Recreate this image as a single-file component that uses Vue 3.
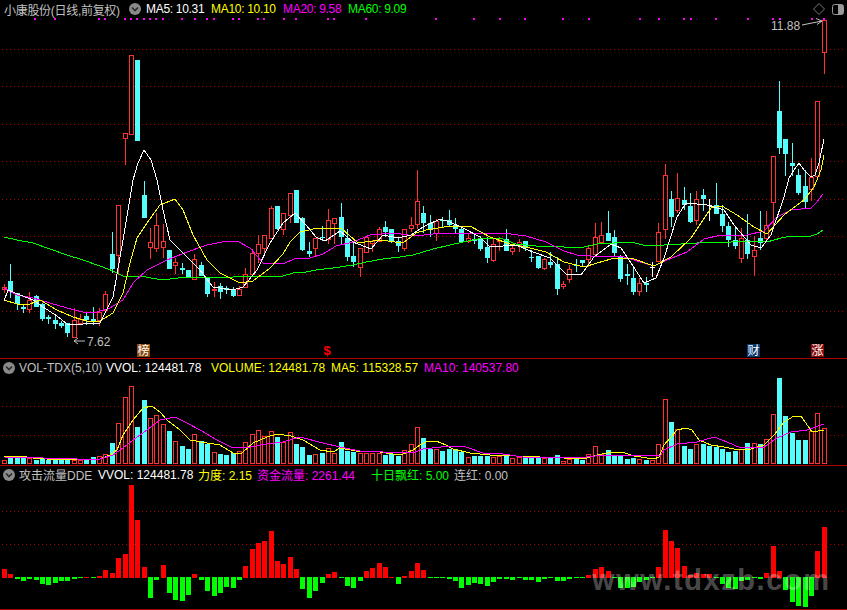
<template>
  <div class="screen">
    <!-- K line pane -->
    <div class="pane pane-main">
      <div class="head main-head">
        <span class="title grey">小康股份(日线,前复权)</span>
        <svg class="chev" viewBox="0 0 12 12"><circle cx="6" cy="6" r="6" fill="#8a8a8a" /><path d="M3 4.5 6 7.5 9 4.5" fill="none" stroke="#2a2a2a" stroke-width="1.6" /></svg>
        <span class="ma5 white">MA5: 10.31</span>
        <span class="ma10 yellow">MA10: 10.10</span>
        <span class="ma20 magenta">MA20: 9.58</span>
        <span class="green">MA60: 9.09</span>
        <svg class="tool diamond" viewBox="0 0 12 12"><path d="M6 .5 11.5 6 6 11.5 .5 6Z" fill="none" stroke="#777" /></svg>
        <svg class="tool panel" viewBox="0 0 12 11"><rect x=".5" y=".5" width="11" height="10" rx="2" fill="#000" stroke="#999" /><rect x="6" y="1" width="5" height="9" fill="#999" /></svg>
      </div>
      <svg class="chart" width="847" height="340" viewBox="0 18 847 340">
        <line v-for="y in mainGrid" :key="y" class="grid" x1="2" x2="845" :y1="y + 0.5" :y2="y + 0.5" />
        <rect v-for="x in dots" :key="x" :x="x - 1" y="18" width="2" height="2" fill="#ff00ff" />
        <g v-for="c in candles" :key="c.i">
          <line :class="'wick ' + c.kind" :x1="c.x + 2.5" :x2="c.x + 2.5" :y1="c.high" :y2="c.low" />
          <rect v-if="c.kind === 'r'" class="hollow" :x="c.x + 0.5" :y="c.top + 0.5" width="4" :height="c.h" />
          <rect v-else :class="'solid ' + c.kind" :x="c.x" :y="c.top" width="5" :height="c.kind === 'c' ? c.h : 1" />
        </g>
        <polyline class="line" stroke="#00ff00" :points="ma60" />
        <polyline class="line" stroke="#ff00ff" :points="ma20" />
        <polyline class="line" stroke="#ffff00" :points="ma10" />
        <polyline class="line" stroke="#ffffff" :points="ma5" />

        <text class="price" x="771" y="30">11.88</text>
        <path class="arrow" d="M802 25 822 21M816 18.500 822 21 817 24.500" />
        <text class="price" x="87" y="346">7.62</text>
        <path class="arrow" d="M85 341H74M78 338 74 341 78 344" />

        <rect x="137" y="344" width="13" height="13" fill="#8a4a12" />
        <text class="tag" x="143.500" y="355">榜</text>
        <text class="dollar" x="327" y="355">$</text>
        <rect x="747" y="344" width="13" height="13" fill="#0a3a6e" />
        <text class="tag" x="753.500" y="355">财</text>
        <rect x="811" y="344" width="13" height="13" fill="#8a0a0a" />
        <text class="tag" x="817.500" y="355">涨</text>
      </svg>
    </div>

    <!-- volume pane -->
    <div class="pane pane-vol">
      <div class="head">
        <svg class="chev" viewBox="0 0 12 12"><circle cx="6" cy="6" r="6" fill="#8a8a8a" /><path d="M3 4.5 6 7.500 9 4.500" fill="none" stroke="#2a2a2a" stroke-width="1.6" /></svg>
        <span class="v-title grey">VOL-TDX(5,10)</span>
        <span class="v-wol white">VVOL: 124481.78</span>
        <span class="v-volume yellow">VOLUME: 124481.78</span>
        <span class="v-ma5 yellow">MA5: 115328.57</span>
        <span class="magenta">MA10: 140537.80</span>
      </div>
      <svg class="chart" width="847" height="89" viewBox="0 376 847 89">
        <line v-for="y in [406, 435]" :key="y" class="grid" x1="2" x2="845" :y1="y + 0.5" :y2="y + 0.5" />
        <template v-for="b in volBars" :key="b.i">
          <rect v-if="b.red" class="hollow" :x="b.x + 0.5" :y="b.top + 0.5" width="4" :height="463 - b.top" />
          <rect v-else class="solid c" :x="b.x" :y="b.top" width="5" :height="464 - b.top" />
        </template>
        <polyline class="line" stroke="#ffff00" :points="volMa5" />
        <polyline class="line" stroke="#ff00ff" :points="volMa10" />
      </svg>
    </div>

    <!-- DDE pane -->
    <div class="pane pane-dde">
      <div class="head">
        <svg class="chev" viewBox="0 0 12 12"><circle cx="6" cy="6" r="6" fill="#8a8a8a" /><path d="M3 4.500 6 7.500 9 4.500" fill="none" stroke="#2a2a2a" stroke-width="1.6" /></svg>
        <span class="d-title grey">攻击流量DDE</span>
        <span class="d-wol white">VVOL: 124481.78</span>
        <span class="d-force yellow">力度: 2.15</span>
        <span class="d-money magenta">资金流量: 2261.44</span>
        <span class="d-ten green">十日飘红: 5.00</span>
        <span class="grey">连红: 0.00</span>
      </div>
      <svg class="chart" width="847" height="126" viewBox="0 483 847 126">
        <line v-for="y in [511, 544]" :key="y" class="grid" x1="2" x2="845" :y1="y + 0.5" :y2="y + 0.5" />
        <rect v-for="b in ddeBars" :key="b.i" :x="b.x" :y="b.y" width="5" :height="b.h" :fill="b.fill" />
        <text class="mark" x="592" y="590" textLength="237">www.tdxzb.com</text>
      </svg>
    </div>
  </div>
</template>

<script setup>
const barX = (i) => Math.round(4.3 + i * 6.355 - 2.5)

const mainGrid = [49, 86, 124, 161, 199, 236, 274, 311]

const dots = [35, 55, 99, 105, 125, 131, 137, 144, 150, 156, 163, 182, 195, 207, 214, 233, 239, 258, 264, 284, 296,
  328, 334, 366, 436, 474, 500, 525, 563, 589, 640, 659, 684, 691, 716, 748, 773, 780, 812, 824]

// kind, high, body top, body bottom, low (r = up, c = down, w / x = doji)
const rawCandles = [
  ['r', 284, 287, 289, 293], ['c', 264, 281, 291, 298], ['c', 293, 293, 304, 310], ['c', 304, 307, 309, 313],
  ['r', 292, 300, 309, 313], ['c', 295, 296, 307, 307], ['c', 303, 304, 319, 321], ['c', 315, 317, 319, 324],
  ['c', 316, 320, 324, 329], ['c', 321, 323, 326, 328], ['c', 323, 323, 333, 337], ['r', 308, 320, 337, 337],
  ['r', 314, 319, 323, 324], ['c', 313, 316, 320, 325], ['c', 307, 319, 322, 325], ['r', 308, 312, 320, 326],
  ['r', 291, 294, 310, 310], ['c', 232, 254, 269, 273], ['r', 205, 205, 255, 275], ['r', 133, 133, 138, 165],
  ['r', 55, 55, 134, 134], ['c', 60, 60, 141, 141], ['c', 181, 195, 218, 218], ['r', 228, 242, 247, 259],
  ['r', 213, 225, 248, 252], ['r', 224, 241, 247, 258], ['c', 250, 250, 269, 269], ['r', 258, 262, 265, 274],
  ['c', 263, 268, 270, 274], ['c', 270, 270, 277, 277], ['r', 254, 259, 279, 280], ['c', 262, 265, 276, 276],
  ['c', 277, 277, 294, 297], ['r', 282, 289, 290, 297], ['c', 283, 286, 292, 299], ['c', 286, 288, 290, 294],
  ['c', 287, 289, 296, 297], ['r', 286, 289, 295, 295], ['r', 268, 274, 287, 287], ['r', 249, 253, 274, 274],
  ['r', 235, 244, 253, 263], ['r', 235, 235, 248, 255], ['r', 206, 208, 238, 239], ['c', 206, 206, 229, 230],
  ['r', 213, 213, 229, 235], ['r', 193, 193, 215, 223], ['c', 190, 190, 223, 223], ['c', 217, 218, 250, 251],
  ['c', 242, 251, 254, 257], ['r', 238, 238, 248, 256], ['c', 226, 237, 238, 241], ['r', 209, 220, 239, 244],
  ['r', 218, 218, 223, 244], ['c', 203, 217, 237, 244], ['c', 229, 238, 257, 261], ['c', 241, 256, 262, 267],
  ['r', 248, 248, 267, 277], ['r', 236, 237, 252, 253], ['r', 240, 241, 243, 252], ['r', 227, 229, 241, 241],
  ['c', 221, 227, 232, 237], ['c', 229, 229, 242, 243], ['c', 237, 241, 246, 252], ['r', 229, 229, 248, 251],
  ['r', 217, 225, 228, 232], ['r', 170, 201, 224, 229], ['c', 206, 213, 223, 233], ['c', 215, 223, 230, 237],
  ['r', 219, 221, 233, 241], ['c', 217, 220, 221, 227], ['c', 210, 220, 225, 227], ['c', 218, 225, 229, 233],
  ['c', 227, 229, 242, 243], ['r', 234, 238, 241, 243], ['c', 235, 239, 241, 244], ['c', 236, 239, 249, 251],
  ['c', 237, 247, 258, 263], ['r', 239, 244, 260, 262], ['r', 237, 240, 241, 251], ['c', 229, 239, 251, 251],
  ['r', 245, 248, 251, 255], ['r', 239, 242, 245, 252], ['c', 241, 241, 248, 251], ['c', 250, 257, 258, 262],
  ['c', 256, 256, 268, 269], ['r', 258, 259, 268, 270], ['c', 252, 262, 265, 268], ['c', 257, 264, 289, 295],
  ['r', 281, 284, 286, 289], ['r', 265, 269, 279, 283], ['c', 259, 265, 266, 272], ['c', 260, 260, 263, 267],
  ['r', 246, 248, 259, 267], ['r', 223, 237, 254, 254], ['r', 222, 235, 242, 242], ['c', 211, 233, 241, 241],
  ['c', 230, 237, 253, 256], ['c', 255, 256, 279, 282], ['c', 264, 274, 276, 285], ['c', 267, 278, 292, 295],
  ['r', 278, 283, 291, 296], ['c', 277, 283, 285, 292], ['w', 262, 267, 268, 277], ['r', 223, 232, 261, 261],
  ['r', 164, 175, 229, 239], ['c', 191, 199, 217, 227], ['r', 173, 198, 210, 213], ['c', 187, 200, 205, 210],
  ['c', 193, 206, 222, 223], ['r', 191, 199, 220, 225], ['c', 189, 195, 199, 211], ['x', 199, 205, 206, 221],
  ['c', 183, 205, 214, 214], ['c', 205, 214, 226, 232], ['c', 222, 226, 240, 247], ['c', 228, 240, 246, 249],
  ['r', 228, 238, 258, 263], ['c', 214, 240, 254, 259], ['r', 236, 250, 256, 276], ['c', 211, 238, 243, 250],
  ['r', 211, 225, 238, 240], ['r', 156, 156, 202, 227], ['c', 81, 111, 148, 154], ['c', 139, 139, 154, 176],
  ['c', 143, 163, 166, 176], ['c', 169, 175, 193, 195], ['c', 170, 186, 202, 209], ['r', 158, 177, 189, 201],
  ['r', 101, 101, 176, 178], ['r', 20, 20, 52, 74]
]

const candles = rawCandles.map((c, i) => ({
  i,
  x: barX(i),
  kind: c[0],
  high: c[1],
  top: c[2],
  h: Math.max(1, c[3] - c[2]),
  low: c[4]
}))

const ma5 = '4,301 8,290 20,295 33,300 43,307 57,316 67,324 83,324 100,323 113,297 123,240 133,180 138,163 144,150 151,160 157,180 163,210 170,240 183,253 200,270 213,287 233,290 243,287 257,270 270,243 283,223 295,213 306,225 316,237 325,241 340,231 353,242 371,249 383,235 398,238 411,235 423,227 440,219 450,222 463,228 480,237 490,247 503,246 516,245 533,252 550,258 566,274 581,275 594,257 611,244 621,248 631,263 644,283 656,278 664,258 677,217 686,203 707,205 724,210 734,225 751,245 761,248 771,235 784,197 789,178 794,170 799,163 805,171 811,177 815,175 819,163 824,139'
const ma10 = '4,300 17,304 30,304 40,300 57,310 73,317 87,321 100,321 113,313 123,293 130,263 137,238 147,223 160,205 175,199 183,210 193,235 207,260 220,273 240,283 253,281 270,268 283,254 290,242 300,232 313,229 326,228 341,228 358,243 380,240 403,243 416,233 426,230 450,226 470,226 490,237 510,244 530,248 546,252 564,262 584,267 597,263 611,259 631,258 654,266 671,257 691,238 711,208 722,206 737,215 754,227 767,234 784,215 804,200 814,187 821,170 824,155'
const ma20 = '4,288 17,295 33,298 50,303 67,308 83,312 97,312 110,308 123,300 133,283 147,270 167,260 187,252 207,245 227,241 237,241 250,248 263,263 283,264 296,258 310,258 323,254 336,246 353,242 370,235 393,233 416,236 433,234 446,233 463,234 483,233 503,233 526,236 546,242 564,251 577,255 604,257 621,256 637,261 654,266 667,260 687,252 704,239 721,235 747,235 764,231 777,217 791,210 811,208 817,202 823,194'
const ma60 = '4,237 17,240 33,243 50,249 67,255 83,260 100,266 113,271 123,276 140,276 157,279 170,279 187,277 207,277 233,277 260,276 283,276 293,273 306,272 316,270 333,268 353,265 366,262 383,259 400,257 413,255 433,249 450,245 463,242 483,238 500,238 516,244 536,246 564,247 584,247 597,244 614,243 631,242 647,246 664,245 681,244 697,243 714,242 731,242 751,241 767,242 781,238 791,236 811,236 817,234 823,230'

// volume heights in 1/3 px above the pane bottom
const volumes = [
  11, 20, 20, 19, 19, 12, 18, 12, 17, 15, 14, 13, 13, 11, 21, 23, 29, 63, 122, 200,
  233, 111, 192, 137, 146, 119, 99, 68, 54, 45, 89, 68, 61, 35, 30, 27, 34, 38, 67, 89,
  101, 83, 98, 81, 67, 95, 60, 51, 27, 29, 33, 47, 34, 66, 39, 36, 33, 33, 33, 33,
  27, 31, 24, 41, 60, 110, 78, 45, 45, 39, 45, 44, 37, 20, 24, 25, 25, 22, 23, 27,
  17, 22, 18, 22, 21, 17, 21, 27, 10, 16, 18, 12, 29, 53, 29, 42, 24, 26, 15, 18,
  14, 12, 12, 59, 194, 126, 104, 54, 45, 59, 60, 54, 52, 45, 36, 39, 45, 63, 62, 60,
  74, 149, 258, 144, 93, 72, 72, 98, 152, 107
]

const volBars = volumes.map((v, i) => ({
  i,
  x: barX(i),
  top: 464 - Math.round(v / 3),
  red: ['r', 'w'].includes(rawCandles[i][0])
}))

const volMa5 = '4,456 20,456 33,458 47,459 77,459 100,459 110,455 117,450 123,435 133,420 143,408 152,406 160,412 167,420 180,430 190,440 207,443 220,445 233,453 242,453 253,443 267,437 277,434 291,436 303,440 320,450 333,452 340,448 356,451 380,452 393,454 403,454 413,450 420,445 426,442 436,441 446,445 453,449 470,453 490,455 516,456 564,458 587,458 597,455 607,453 614,452 622,452 634,456 654,459 659,457 664,445 677,430 686,428 692,430 699,440 711,445 724,447 734,449 751,449 764,445 774,435 784,422 794,416 801,416 812,432 824,430'
const volMa10 = '4,457 43,458 77,459 100,459 113,455 123,448 133,440 147,430 160,420 175,417 187,423 200,430 217,440 233,448 250,447 267,444 283,442 300,437 323,443 340,447 360,451 383,452 413,453 423,449 450,446 466,447 483,453 503,454 523,457 564,457 587,457 604,455 661,455 664,450 677,444 697,442 714,437 727,442 741,448 764,447 777,438 791,432 807,430 824,424'

// DDE values in 1/3 px, plus is up
const ddeValues = [
  26, 11, -7, -13, -7, -10, -22, -25, -19, -13, -13, -7, -2, 2, -2, 5, 23, 14, 59, 71,
  278, 173, 32, -64, -10, 38, -49, -70, -73, -55, 11, -10, -43, -58, -49, -31, -34, -10, 35, 86,
  104, 110, 140, 50, 41, 62, 26, -37, -64, -43, -19, 11, 17, -4, -28, -34, -13, 20, 29, 44,
  32, 2, -22, 5, 20, 44, 23, -2, -4, -4, -7, -13, -34, -25, -19, -22, -28, -16, -7, -7,
  -10, -4, -10, -10, -16, -7, -4, -13, -13, -7, -2, -2, 8, 26, 32, 20, -4, -34, -34, -31,
  -16, -10, -4, 32, 143, 110, 89, 35, 8, 14, 11, 11, -4, -22, -34, -37, -13, -10, -4, -7,
  14, 95, 20, -40, -76, -88, -91, -58, 80, 152
]

const ddeBars = ddeValues.map((v, i) => {
  const h = Math.max(1, Math.round(Math.abs(v) / 3))
  return v > 0
    ? { i, x: barX(i), y: 578 - h, h, fill: '#ff0000' }
    : { i, x: barX(i), y: 577, h, fill: '#00ff00' }
})
</script>

<style scoped>
.screen {
  width: 847px;
  height: 610px;
  background: #000;
  display: flex;
  flex-direction: column;
  overflow: hidden;
  font-family: "Liberation Sans", "Noto Sans CJK SC", sans-serif;
  font-size: 12px;
}

.pane {
  flex: none;
  box-sizing: border-box;
  border-bottom: 1px solid #b00000;
}

.pane-main {
  height: 359px;
}

.pane-vol {
  height: 107px;
}

.pane-dde {
  height: 144px;
}

.head {
  height: 17px;
  display: flex;
  align-items: center;
  padding-left: 3px;
  white-space: nowrap;
}

.main-head {
  height: 18px;
  padding-left: 4px;
  letter-spacing: -0.3px;
}

.chart {
  display: block;
}

.chev {
  width: 12px;
  height: 12px;
  flex: none;
}

.title {
  width: 125px;
}

.ma5 {
  width: 65px;
  margin-left: 5px;
}

.ma10 {
  width: 72px;
}

.ma20 {
  width: 65px;
}

.tool {
  flex: none;
}

.diamond {
  width: 12px;
  height: 12px;
  margin-left: auto;
}

.panel {
  width: 12px;
  height: 11px;
  margin: 0 3px 0 7px;
}

.v-title {
  width: 87px;
  margin-left: 4px;
}

.v-wol {
  width: 105px;
}

.v-volume {
  width: 120px;
}

.v-ma5 {
  width: 93px;
}

.d-title {
  width: 79px;
  margin-left: 4px;
}

.d-wol {
  width: 100px;
}

.d-force {
  width: 59px;
}

.d-money {
  width: 114px;
}

.d-ten {
  width: 83px;
}

.grey {
  color: #c0c0c0;
}

.white {
  color: #fff;
}

.yellow {
  color: #ffff00;
}

.magenta {
  color: #ff00ff;
}

.green {
  color: #00ff00;
}

.grid {
  stroke: #b00000;
  stroke-width: 1;
  stroke-dasharray: 1 3;
  shape-rendering: crispEdges;
}

.wick {
  stroke-width: 1;
  shape-rendering: crispEdges;
}

.wick.r {
  stroke: #ff3232;
}

.wick.c {
  stroke: #54fcfc;
}

.wick.w,
.wick.x {
  stroke: #fff;
}

.hollow {
  fill: #000;
  stroke: #ff3232;
  stroke-width: 1;
  shape-rendering: crispEdges;
}

.solid.c {
  fill: #54fcfc;
}

.solid.w,
.solid.x {
  fill: #fff;
}

.line {
  fill: none;
  stroke-width: 1;
  shape-rendering: crispEdges;
}

.price {
  fill: #c0c0c0;
  font-size: 12px;
}

.arrow {
  fill: none;
  stroke: #c0c0c0;
  stroke-width: 1;
}

.tag {
  fill: #fff;
  font-size: 12px;
  text-anchor: middle;
}

.dollar {
  fill: #ff0000;
  font-size: 13px;
  font-weight: bold;
  text-anchor: middle;
}

.mark {
  fill: rgba(255, 255, 255, 0.3);
  font-size: 29px;
  font-weight: bold;
}
</style>

<style>
body {
  background: #000;
}
</style>
